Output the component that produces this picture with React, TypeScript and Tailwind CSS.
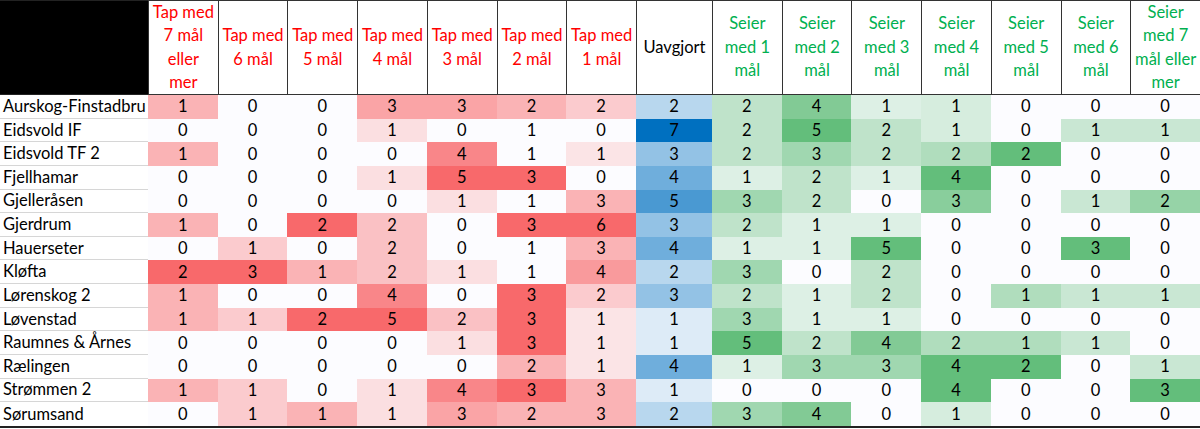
import React from "react";

type Kind = "loss" | "draw" | "win";

const headers: { lines: string[]; kind: Kind }[] = [
    { lines: ["Tap med", "7 mål", "eller", "mer"], kind: "loss" },
    { lines: ["Tap med", "6 mål"], kind: "loss" },
    { lines: ["Tap med", "5 mål"], kind: "loss" },
    { lines: ["Tap med", "4 mål"], kind: "loss" },
    { lines: ["Tap med", "3 mål"], kind: "loss" },
    { lines: ["Tap med", "2 mål"], kind: "loss" },
    { lines: ["Tap med", "1 mål"], kind: "loss" },
    { lines: ["Uavgjort"], kind: "draw" },
    { lines: ["Seier", "med 1", "mål"], kind: "win" },
    { lines: ["Seier", "med 2", "mål"], kind: "win" },
    { lines: ["Seier", "med 3", "mål"], kind: "win" },
    { lines: ["Seier", "med 4", "mål"], kind: "win" },
    { lines: ["Seier", "med 5", "mål"], kind: "win" },
    { lines: ["Seier", "med 6", "mål"], kind: "win" },
    { lines: ["Seier", "med 7", "mål eller", "mer"], kind: "win" },
];

const rows: [string, number[]][] = [
    ["Aurskog-Finstadbru", [1, 0, 0, 3, 3, 2, 2, 2, 2, 4, 1, 1, 0, 0, 0]],
    ["Eidsvold IF", [0, 0, 0, 1, 0, 1, 0, 7, 2, 5, 2, 1, 0, 1, 1]],
    ["Eidsvold TF 2", [1, 0, 0, 0, 4, 1, 1, 3, 2, 3, 2, 2, 2, 0, 0]],
    ["Fjellhamar", [0, 0, 0, 1, 5, 3, 0, 4, 1, 2, 1, 4, 0, 0, 0]],
    ["Gjelleråsen", [0, 0, 0, 0, 1, 1, 3, 5, 3, 2, 0, 3, 0, 1, 2]],
    ["Gjerdrum", [1, 0, 2, 2, 0, 3, 6, 3, 2, 1, 1, 0, 0, 0, 0]],
    ["Hauerseter", [0, 1, 0, 2, 0, 1, 3, 4, 1, 1, 5, 0, 0, 3, 0]],
    ["Kløfta", [2, 3, 1, 2, 1, 1, 4, 2, 3, 0, 2, 0, 0, 0, 0]],
    ["Lørenskog 2", [1, 0, 0, 4, 0, 3, 2, 3, 2, 1, 2, 0, 1, 1, 1]],
    ["Løvenstad", [1, 1, 2, 5, 2, 3, 1, 1, 3, 1, 1, 0, 0, 0, 0]],
    ["Raumnes & Årnes", [0, 0, 0, 0, 1, 3, 1, 1, 5, 2, 4, 2, 1, 1, 0]],
    ["Rælingen", [0, 0, 0, 0, 0, 2, 1, 4, 1, 3, 3, 4, 2, 0, 1]],
    ["Strømmen 2", [1, 1, 0, 1, 4, 3, 3, 1, 0, 0, 0, 4, 0, 0, 3]],
    ["Sørumsand", [0, 1, 1, 1, 3, 2, 3, 2, 3, 4, 0, 1, 0, 0, 0]],
];

const scales: Record<Kind, { lo: number[]; hi: number[] }> = {
    loss: { lo: [252, 252, 255], hi: [248, 105, 107] },
    draw: { lo: [221, 235, 247], hi: [0, 112, 192] },
    win: { lo: [252, 252, 255], hi: [99, 190, 123] },
};

// colour scale per column, min -> max like Excel's conditional formatting
function cellColor(col: number, v: number) {
    const values = rows.map(([, r]) => r[col]);
    const min = Math.min(...values);
    const max = Math.max(...values);
    const t = max === min ? 0 : (v - min) / (max - min);
    const { lo, hi } = scales[headers[col].kind];
    const c = lo.map((a, i) => Math.round(a + (hi[i] - a) * t));
    return `rgb(${c[0]}, ${c[1]}, ${c[2]})`;
}

const headColor: Record<Kind, string> = {
    loss: "text-[#ff0000]",
    draw: "text-black",
    win: "text-[#00b050]",
};

export default function App() {
    return (
        <div className="h-[429px] w-[1200px] overflow-hidden bg-white font-['Lato',sans-serif] text-[16.5px] text-black">
            <div className="grid grid-cols-[148px_repeat(7,minmax(0,1fr))_76px_repeat(7,minmax(0,1fr))] grid-rows-[95px_repeat(14,23.64px)] border-b-2 border-[#222]">
                <div className="border-t border-b border-[#222] bg-black" />
                {headers.map((h, i) => (
                    <div
                        key={i}
                        className={`flex flex-col items-center justify-center border-t border-b border-l border-[#333] text-center leading-[23.5px] ${headColor[h.kind]}`}
                    >
                        {h.lines.map((l) => (
                            <span key={l} className="whitespace-nowrap">
                                {l}
                            </span>
                        ))}
                    </div>
                ))}

                {rows.map(([name, values], r) => (
                    <React.Fragment key={name}>
                        <div
                            className={`flex items-center pl-[3px] whitespace-nowrap ${
                                r < rows.length - 1 ? "border-b border-[#d6d6d6]" : ""
                            }`}
                        >
                            {name}
                        </div>
                        {values.map((v, c) => (
                            <div
                                key={c}
                                className="flex items-center justify-center"
                                style={{ backgroundColor: cellColor(c, v) }}
                            >
                                {v}
                            </div>
                        ))}
                    </React.Fragment>
                ))}
            </div>
        </div>
    );
}
